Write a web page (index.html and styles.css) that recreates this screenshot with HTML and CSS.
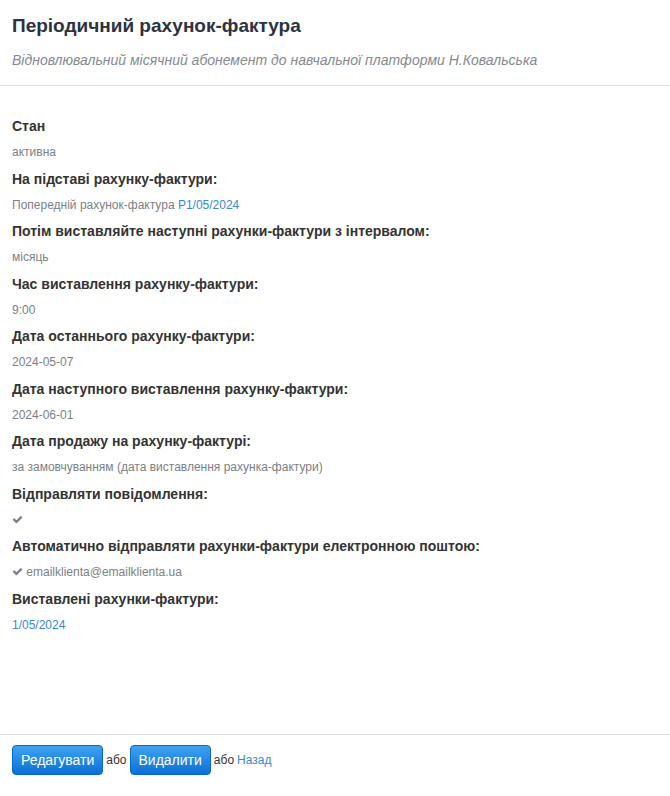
FILE: index.html
```html
<!DOCTYPE html>
<html lang="uk">
<head>
    <meta charset="UTF-8">
    <title>Періодичний рахунок-фактура</title>
    <link rel="stylesheet" href="styles.css">
</head>
<body>
<div class="page">
    <div class="page-header">
        <h1>Періодичний рахунок-фактура</h1>
        <p class="subtitle">Відновлювальний місячний абонемент до навчальної платформи Н.Ковальська</p>
    </div>

    <dl class="details">
        <dt>Стан</dt>
        <dd>активна</dd>

        <dt>На підставі рахунку-фактури:</dt>
        <dd>Попередній рахунок-фактура <a href="#">P1/05/2024</a></dd>

        <dt>Потім виставляйте наступні рахунки-фактури з інтервалом:</dt>
        <dd>місяць</dd>

        <dt>Час виставлення рахунку-фактури:</dt>
        <dd>9:00</dd>

        <dt>Дата останнього рахунку-фактури:</dt>
        <dd>2024-05-07</dd>

        <dt>Дата наступного виставлення рахунку-фактури:</dt>
        <dd>2024-06-01</dd>

        <dt>Дата продажу на рахунку-фактурі:</dt>
        <dd>за замовчуванням (дата виставлення рахунка-фактури)</dd>

        <dt>Відправляти повідомлення:</dt>
        <dd><svg class="check" viewBox="0 0 1792 1792"><path d="M1671 566q0 40-28 68l-724 724-136 136q-28 28-68 28t-68-28l-136-136-362-362q-28-28-28-68t28-68l136-136q28-28 68-28t68 28l294 295 656-657q28-28 68-28t68 28l136 136q28 28 28 68z"/></svg></dd>

        <dt>Автоматично відправляти рахунки-фактури електронною поштою:</dt>
        <dd><svg class="check" viewBox="0 0 1792 1792"><path d="M1671 566q0 40-28 68l-724 724-136 136q-28 28-68 28t-68-28l-136-136-362-362q-28-28-28-68t28-68l136-136q28-28 68-28t68 28l294 295 656-657q28-28 68-28t68 28l136 136q28 28 28 68z"/></svg> emailklienta@emailklienta.ua</dd>

        <dt>Виставлені рахунки-фактури:</dt>
        <dd><a href="#">1/05/2024</a></dd>
    </dl>

    <div class="form-actions">
        <button type="button" class="btn">Редагувати</button>
        <span class="or">або</span>
        <button type="button" class="btn">Видалити</button>
        <span class="or">або</span>
        <a href="#">Назад</a>
    </div>
</div>
</body>
</html>
```

FILE: styles.css
```css
body {
    margin: 0;
    font-family: "Liberation Sans", Arial, sans-serif;
    color: #333;
    background: #fff;
}

a {
    color: #3a87d4;
    text-decoration: none;
}

.page {
    min-height: 100vh;
    display: flex;
    flex-direction: column;
}

.page-header {
    padding: 14px 12px 0;
    border-bottom: 1px solid #dcdde1;
}

.page-header h1 {
    margin: 0;
    font-size: 19px;
    line-height: 24px;
    color: #2b3241;
}

.subtitle {
    margin: 12px 0 0;
    padding-bottom: 15px;
    font-size: 14px;
    line-height: 20px;
    font-style: italic;
    color: #858990;
}

.details {
    flex: 1;
    margin: 0;
    padding: 27px 12px 0;
}

.details dt {
    font-size: 14px;
    font-weight: bold;
    line-height: 26.25px;
    color: #333;
}

.details dd {
    margin: 0;
    font-size: 12px;
    line-height: 26.25px;
    color: #7c7f86;
}

.check {
    width: 11px;
    height: 11px;
    fill: #7c7f86;
    vertical-align: -1px;
}

.form-actions {
    border-top: 1px solid #dcdde1;
    padding: 10px 12px 21px;
    display: flex;
    align-items: center;
    gap: 3px;
    font-size: 12px;
}

.btn {
    height: 30px;
    padding: 0 8px;
    border: 1px solid #0b67c4;
    border-radius: 4px;
    background: linear-gradient(#3fa2f2, #0a70d6);
    color: #fff;
    font-family: "Liberation Sans", Arial, sans-serif;
    font-size: 14px;
    cursor: pointer;
}

.or {
    color: #333;
}
```
